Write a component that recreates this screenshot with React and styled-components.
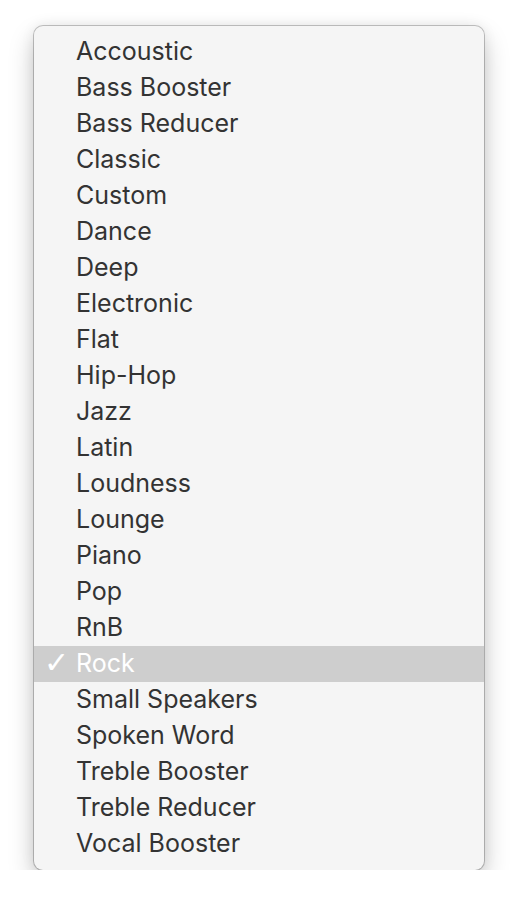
import React, { useState } from "react";
import styled, { createGlobalStyle } from "styled-components";

const GlobalStyle = createGlobalStyle`
  html, body {
    margin: 0;
    padding: 0;
    background: #ffffff;
  }
`;

const Page = styled.div`
  padding: 26px 34px 0 34px;
`;

const Menu = styled.ul`
  list-style: none;
  margin: 0;
  padding: 8px 0;
  width: 450px;
  box-sizing: border-box;
  background: #f5f5f5;
  border-radius: 9px;
  box-shadow: 0 0 0 1px rgba(0, 0, 0, 0.22), 0 12px 26px rgba(0, 0, 0, 0.22),
    0 0 14px rgba(0, 0, 0, 0.08);
  font-family: Inter, "Liberation Sans", sans-serif;
`;

const Item = styled.li`
  position: relative;
  height: 36px;
  display: flex;
  align-items: center;
  padding-left: 42px;
  padding-bottom: 3px;
  box-sizing: border-box;
  font-size: 25px;
  color: ${(p) => (p.selected ? "#ffffff" : "#333333")};
  background: ${(p) => (p.selected ? "#cecece" : "transparent")};
  cursor: default;
`;

const Check = styled.span`
  position: absolute;
  left: 10px;
  font-size: 30px;
  font-weight: bold;
  color: #ffffff;
  font-family: "DejaVu Sans", sans-serif;
`;

const presets = [
  "Accoustic",
  "Bass Booster",
  "Bass Reducer",
  "Classic",
  "Custom",
  "Dance",
  "Deep",
  "Electronic",
  "Flat",
  "Hip-Hop",
  "Jazz",
  "Latin",
  "Loudness",
  "Lounge",
  "Piano",
  "Pop",
  "RnB",
  "Rock",
  "Small Speakers",
  "Spoken Word",
  "Treble Booster",
  "Treble Reducer",
  "Vocal Booster",
];

function App() {
  const [selected, setSelected] = useState("Rock");

  return (
    <Page>
      <GlobalStyle />
      <Menu>
        {presets.map((name) => (
          <Item
            key={name}
            selected={name === selected}
            onClick={() => setSelected(name)}
          >
            {name === selected && <Check>✓</Check>}
            {name}
          </Item>
        ))}
      </Menu>
    </Page>
  );
}

export default App;
